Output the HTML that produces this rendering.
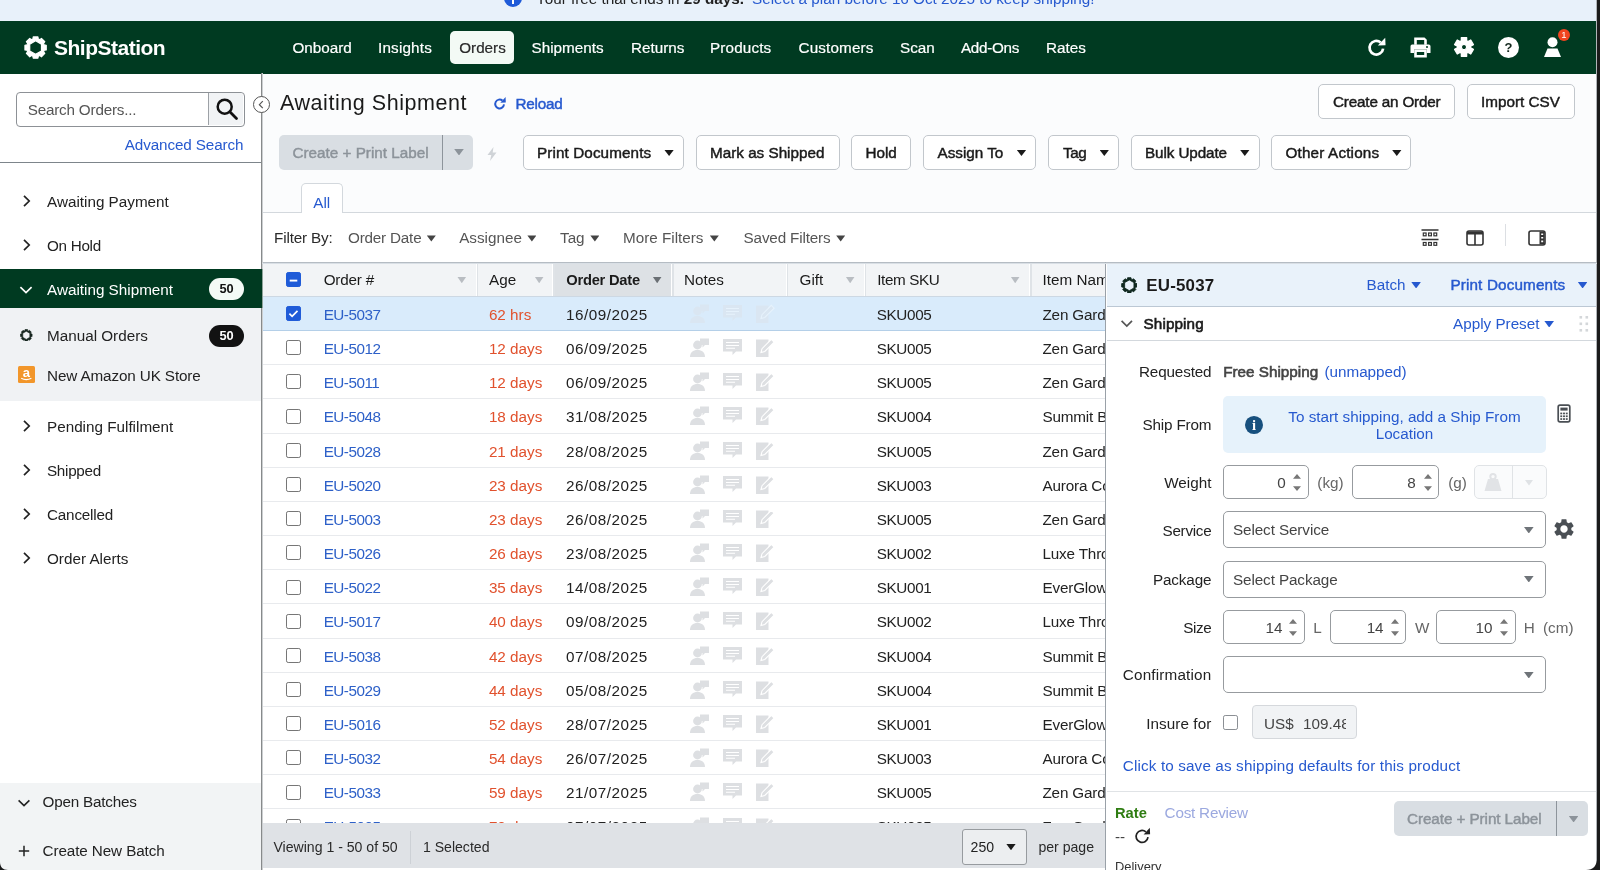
<!DOCTYPE html>
<html lang="en"><head><meta charset="utf-8"><title>ShipStation - Awaiting Shipment</title>
<style>
*{box-sizing:border-box;margin:0;padding:0}
html,body{width:1600px;height:870px;overflow:hidden;background:#fff}
body{font-family:"Liberation Sans",sans-serif;font-size:15.25px;color:#222;-webkit-font-smoothing:antialiased}
#app{position:relative;width:1600px;height:870px;overflow:hidden;will-change:transform}
.a{position:absolute;white-space:nowrap}
.t{position:absolute;white-space:nowrap;height:20px;line-height:20px}
.banner{left:0;top:0;width:1597px;height:21px;background:#e8f1fa}
.hdr{left:0;top:21px;width:1597px;height:52.8px;background:#003a21}
.nav{color:#fff;top:17px;font-size:15.25px;-webkit-text-stroke:0.2px currentColor}
.navpill{left:450px;top:10px;width:63.5px;height:33px;border-radius:5px;background:#f3faf5}
.side{left:0;top:74px;width:261px;height:797px;background:#fff}
.sideborder{left:261px;top:73.4px;width:2px;height:797px;background:linear-gradient(90deg,#878a8b 50%,#cccfd1 50%)}
.sitem{left:47px;font-size:15.25px;color:#222}
.btn{position:absolute;height:34.4px;top:135.2px;border:1px solid #c2c7cc;border-radius:5px;background:#fff;font-weight:normal;-webkit-text-stroke:0.45px #1a1a1a;letter-spacing:0;color:#1a1a1a;font-size:15.25px;line-height:34.6px;white-space:nowrap}
.btn .tx{position:absolute;top:0}
.caret{position:absolute;width:9.6px;height:6.4px;background:#1a1a1a;clip-path:polygon(0 0,100% 0,50% 100%)}
.flt{color:#555;top:228.3px}
.fcar{position:absolute;width:9px;height:6.2px;background:#444;clip-path:polygon(0 0,100% 0,50% 100%);top:235.4px}
.th{position:absolute;top:263.3px;height:33px;line-height:34.2px;color:#1a1a1a;white-space:nowrap}
.thc{position:absolute;top:276.6px;width:9.2px;height:6.6px;background:#b9bdc2;clip-path:polygon(0 0,100% 0,50% 100%)}
.vdiv{position:absolute;top:263.3px;height:33px;width:1.4px;background:#dfe3e7;box-shadow:-1px 0 0 #fff}
.row{position:absolute;left:262px;width:843.4px;height:34.18px;border-bottom:1px solid #e8eaed;background:#fff}
.row.sel{background:#d9ebfb;border-bottom:1px solid #b4cfe8}
.c{position:absolute;top:0;height:34px;line-height:35.2px;white-space:nowrap;color:#222}
.c.lnk{color:#2d60c8;line-height:36.8px;letter-spacing:-0.5px}
.c.dt{letter-spacing:0.55px}
.c.age{color:#e1512d}
.cb{position:absolute;width:15px;height:15px;border:1.3px solid #767676;border-radius:2.2px;background:#fff}
.cb.on{background:#1f5bd8;border-color:#1f5bd8}
.cb svg{position:absolute;left:-1.3px;top:-1.3px}
.ni{position:absolute;top:6px}
.row.sel .ni{opacity:.35}
.foot{left:262px;top:823px;width:843.4px;height:45px;background:#dfe2e6}
.panel{left:1105.3px;top:262.2px;width:491.7px;height:608px;background:#fff;border-left:1.2px solid #9aa1a8;border-top:1.2px solid #b5bcc3}
.lbl{position:absolute;white-space:nowrap;height:20px;line-height:20px;color:#222;text-align:right;right:385.5px}
.inp{position:absolute;border:1px solid #979b9f;border-radius:5px;background:#fff}
.num{position:absolute;white-space:nowrap;height:20px;line-height:20px;color:#444;text-align:right}
.spin{position:absolute;width:8px;height:17px}
.unit{position:absolute;white-space:nowrap;height:20px;line-height:20px;color:#666}
.blue{color:#2659cf}
.md{font-weight:normal!important;font-size:15.25px!important;-webkit-text-stroke:0.45px currentColor}

</style></head><body>
<svg width="0" height="0" style="position:absolute">
<defs>
<g id="notes" fill="#dddfe2">
 <!-- person with bubble -->
 <circle cx="8.5" cy="8" r="4.4"/><path d="M1 20c0-4.6 3-7 7.5-7s7.5 2.4 7.5 7z"/><path d="M11 1.5h9v6.5h-4l-2.5 2.5v-2.5h-2.500z"/>
 <!-- comment -->
 <path d="M34 2h19v12.500h-6l-3.500 3.500v-3.500h-9.500z"/><path d="M37 5.500h13M37 8.500h13M37 11.300h9" stroke="#fff" stroke-width="1.100" fill="none"/>
 <!-- note pencil -->
 <path d="M67 2.500h12.500v17.500h-12.500z"/><path d="M72 15.500l1-3.800 9.300-9.300 2.800 2.800-9.300 9.300z" stroke="#fff" stroke-width="1.100"/>
</g>
</defs></svg>
<div id="app">
<!-- banner -->
<div class="a banner"></div>
<div class="a" style="left:504px;top:-11px;width:18px;height:18px;border-radius:50%;background:#1f5bd8"></div>
<div class="a" style="left:511.800px;top:-4px;width:2.600px;height:7.500px;background:#fff"></div>
<div class="t" style="left:536px;top:-10.800px;color:#222">Your free trial ends in <b>29 days.</b></div>
<div class="t" style="left:752px;top:-10.800px;color:#2659cf">Select a plan before 16 Oct 2025 to keep shipping!</div>
<!-- header -->
<div class="a hdr"></div>
<svg class="a" style="left:23.800px;top:36px" width="23.200" height="23.200" viewBox="-12 -12 24 24"><path d="M-2.80 -8.87 L-2.45 -11.03 L2.45 -11.03 L2.80 -8.87 L4.29 -8.25 L6.07 -9.53 L9.53 -6.07 L8.25 -4.29 L8.87 -2.80 L11.03 -2.45 L11.03 2.45 L8.87 2.80 L8.25 4.29 L9.53 6.07 L6.07 9.53 L4.29 8.25 L2.80 8.87 L2.45 11.03 L-2.45 11.03 L-2.80 8.87 L-4.29 8.25 L-6.07 9.53 L-9.53 6.07 L-8.25 4.29 L-8.87 2.80 L-11.03 2.45 L-11.03 -2.45 L-8.87 -2.80 L-8.25 -4.29 L-9.53 -6.07 L-6.07 -9.53 L-4.29 -8.25Z M0.00 -7.00 L6.06 -3.50 L6.06 3.50 L0.00 7.00 L-6.06 3.50 L-6.06 -3.50Z" fill="#fff" stroke="#fff" stroke-width="1.2" stroke-linejoin="round" fill-rule="evenodd"/></svg>
<div class="a" style="left:54px;top:34px;height:28px;line-height:28px;font-size:21px;font-weight:bold;color:#fff;letter-spacing:-0.500px">ShipStation</div>
<div class="a navpill" style="top:31px"></div>
<div class="t nav" style="left:292.500px;top:38px">Onboard</div>
<div class="t nav" style="left:378px;top:38px;letter-spacing:0.18px">Insights</div>
<div class="t nav" style="left:459.200px;top:38px;color:#2a2a2a">Orders</div>
<div class="t nav" style="left:531.500px;top:38px">Shipments</div>
<div class="t nav" style="left:631px;top:38px">Returns</div>
<div class="t nav" style="left:710px;top:38px;letter-spacing:0.15px">Products</div>
<div class="t nav" style="left:798.500px;top:38px;letter-spacing:0.15px">Customers</div>
<div class="t nav" style="left:900px;top:38px">Scan</div>
<div class="t nav" style="left:961px;top:38px;letter-spacing:-0.3px">Add-Ons</div>
<div class="t nav" style="left:1046px;top:38px">Rates</div>
<!-- header icons -->
<svg class="a" style="left:1366.400px;top:37px" width="21" height="21" viewBox="0 0 20 20"><path d="M16.300 11a6.500 6.500 0 1 1-2.300-5.800" fill="none" stroke="#fff" stroke-width="2.600"/><path d="M11.300 8.200l7.300-0.300-0.300-7.300z" fill="#fff"/></svg>
<svg class="a" style="left:1409.500px;top:36.500px" width="21" height="21" viewBox="0 0 21 21"><g fill="#fff"><path d="M4.200 0.500h10.300l2.300 2.300v5h-2.600v-4.700h-7.400v4.700h-2.600z"/><path d="M2.200 7.500h16.600a1.700 1.700 0 0 1 1.700 1.700v6.800h-3.500v-3.500h-13v3.500h-3.500v-6.800a1.700 1.700 0 0 1 1.700-1.700z"/><path d="M4.200 12.500h12.600v8h-12.600zm2.600 2.400v3.200h7.400v-3.200z" fill-rule="evenodd"/></g><circle cx="17" cy="10" r="1" fill="#003a21"/></svg>
<svg class="a" style="left:1453.300px;top:36px" width="22" height="22" viewBox="-11 -11 22 22"><path d="M-2.62 -6.17 L-2.67 -9.32 L2.67 -9.32 L2.62 -6.17 L4.03 -5.35 L6.74 -6.98 L9.41 -2.35 L6.65 -0.82 L6.65 0.82 L9.41 2.35 L6.74 6.98 L4.03 5.35 L2.62 6.17 L2.67 9.32 L-2.67 9.32 L-2.62 6.17 L-4.03 5.35 L-6.74 6.98 L-9.41 2.35 L-6.65 0.82 L-6.65 -0.82 L-9.41 -2.35 L-6.74 -6.98 L-4.03 -5.35Z M-2.6 0 A2.6 2.6 0 1 0 2.6 0 A2.6 2.6 0 1 0 -2.6 0Z" fill="#fff" stroke="#fff" stroke-width="1.3" stroke-linejoin="round" fill-rule="evenodd"/></svg>
<div class="a" style="left:1498px;top:36.800px;width:21px;height:21px;border-radius:50%;background:#fff;color:#12261c;font-weight:bold;font-size:13px;line-height:21.5px;text-align:center">?</div>
<svg class="a" style="left:1543px;top:36px" width="19" height="22" viewBox="0 0 19 22"><circle cx="9.500" cy="6.200" r="5" fill="#fff"/><path d="M4.500 12.500h10l3.500 8.500h-17z" fill="#fff"/></svg>
<div class="a" style="left:1557.700px;top:28.500px;width:12.600px;height:12.600px;border-radius:50%;background:#f0441f;color:#fff;font-size:9.500px;line-height:12.600px;text-align:center">1</div>

<!-- sidebar -->
<div class="a side"></div>
<div class="a" style="left:0;top:307.600px;width:261px;height:93.200px;background:#f0f2f4"></div>
<div class="a" style="left:0;top:268.800px;width:261px;height:39.600px;background:#003a21"></div>
<div class="a" style="left:0;top:782.500px;width:261px;height:88px;background:#f2f4f5"></div>
<div class="a" style="left:0;top:161.800px;width:261px;height:1.200px;background:#7d858b"></div>
<!-- search -->
<div class="a" style="left:15.600px;top:91.500px;width:229.300px;height:35px;border:1px solid #8d9196;border-radius:4px;background:#fff"></div>
<div class="a" style="left:208.300px;top:92.800px;width:35.200px;height:32.600px;border-left:1px solid #9da1a6;border-radius:0 3px 3px 0;background:#f1f3f5"></div>
<div class="t" style="left:27.700px;top:99.500px;color:#555;letter-spacing:-0.200px">Search Orders...</div>
<svg class="a" style="left:215px;top:96.500px" width="24" height="24" viewBox="0 0 24 24"><circle cx="9.700" cy="9.700" r="7" fill="none" stroke="#111" stroke-width="2.500"/><path d="M14.800 14.800l6.700 6.700" stroke="#111" stroke-width="2.800" stroke-linecap="round"/></svg>
<div class="t blue" style="left:124.800px;top:135px;letter-spacing:-0.120px">Advanced Search</div>
<!-- sidebar items -->
<svg class="a" style="left:20px;top:194px" width="14" height="14" viewBox="0 0 14 14"><path d="M4 1.800l5.200 5.200-5.200 5.200" fill="none" stroke="#222" stroke-width="1.700"/></svg>
<div class="t sitem" style="top:191.800px">Awaiting Payment</div>
<svg class="a" style="left:20px;top:238px" width="14" height="14" viewBox="0 0 14 14"><path d="M4 1.800l5.200 5.200-5.200 5.200" fill="none" stroke="#222" stroke-width="1.700"/></svg>
<div class="t sitem" style="top:235.600px;letter-spacing:-0.3px">On Hold</div>
<svg class="a" style="left:19.300px;top:282.600px" width="14" height="14" viewBox="0 0 14 14"><path d="M1.400 4.200l5.600 5.400 5.600-5.400" fill="none" stroke="#fff" stroke-width="1.700"/></svg>
<div class="t sitem" style="top:279.500px;color:#fff">Awaiting Shipment</div>
<div class="a" style="left:209.300px;top:278.400px;width:34.400px;height:21.800px;border-radius:11px;background:#f4faf6;color:#111;font-weight:bold;font-size:12.800px;line-height:22px;text-align:center">50</div>
<svg class="a" style="left:20.100px;top:328.700px" width="12.600" height="12.600" viewBox="-12 -12 24 24"><path d="M-2.80 -8.87 L-2.45 -11.03 L2.45 -11.03 L2.80 -8.87 L4.29 -8.25 L6.07 -9.53 L9.53 -6.07 L8.25 -4.29 L8.87 -2.80 L11.03 -2.45 L11.03 2.45 L8.87 2.80 L8.25 4.29 L9.53 6.07 L6.07 9.53 L4.29 8.25 L2.80 8.87 L2.45 11.03 L-2.45 11.03 L-2.80 8.87 L-4.29 8.25 L-6.07 9.53 L-9.53 6.07 L-8.25 4.29 L-8.87 2.80 L-11.03 2.45 L-11.03 -2.45 L-8.87 -2.80 L-8.25 -4.29 L-9.53 -6.07 L-6.07 -9.53 L-4.29 -8.25Z M0.00 -7.80 L6.75 -3.90 L6.75 3.90 L0.00 7.80 L-6.75 3.90 L-6.75 -3.90Z" fill="#17261f" stroke="#17261f" stroke-width="1.2" stroke-linejoin="round" fill-rule="evenodd"/></svg>
<div class="t sitem" style="top:325.500px">Manual Orders</div>
<div class="a" style="left:209.300px;top:324.800px;width:34.400px;height:21.800px;border-radius:11px;background:#121212;color:#fff;font-weight:bold;font-size:12.800px;line-height:22px;text-align:center">50</div>
<div class="a" style="left:18px;top:366px;width:16.600px;height:17.200px;background:#f2962a;border-radius:1.500px;color:#fff;font-weight:bold;font-size:13px;line-height:13.500px;text-align:center">a</div>
<svg class="a" style="left:18px;top:366.200px" width="16.600" height="16.800" viewBox="0 0 16.600 16.800"><path d="M3.200 12.300q5 2.600 10.200 0" fill="none" stroke="#fff" stroke-width="1.100"/></svg>
<div class="t sitem" style="top:365.900px;letter-spacing:-0.12px">New Amazon UK Store</div>
<svg class="a" style="left:20px;top:419.200px" width="14" height="14" viewBox="0 0 14 14"><path d="M4 1.800l5.200 5.200-5.200 5.200" fill="none" stroke="#222" stroke-width="1.700"/></svg>
<div class="t sitem" style="top:416.700px">Pending Fulfilment</div>
<svg class="a" style="left:20px;top:463px" width="14" height="14" viewBox="0 0 14 14"><path d="M4 1.800l5.200 5.200-5.200 5.200" fill="none" stroke="#222" stroke-width="1.700"/></svg>
<div class="t sitem" style="top:460.700px;letter-spacing:-0.3px">Shipped</div>
<svg class="a" style="left:20px;top:507.100px" width="14" height="14" viewBox="0 0 14 14"><path d="M4 1.800l5.200 5.200-5.200 5.200" fill="none" stroke="#222" stroke-width="1.700"/></svg>
<div class="t sitem" style="top:504.700px;letter-spacing:-0.2px">Cancelled</div>
<svg class="a" style="left:20px;top:551.300px" width="14" height="14" viewBox="0 0 14 14"><path d="M4 1.800l5.200 5.200-5.200 5.200" fill="none" stroke="#222" stroke-width="1.700"/></svg>
<div class="t sitem" style="top:548.900px">Order Alerts</div>
<svg class="a" style="left:17.400px;top:795.500px" width="14" height="14" viewBox="0 0 14 14"><path d="M1.600 4.400l5.400 5.200 5.400-5.200" fill="none" stroke="#222" stroke-width="1.600"/></svg>
<div class="t sitem" style="left:42.500px;top:792.300px;letter-spacing:-0.2px">Open Batches</div>
<svg class="a" style="left:17.400px;top:843.500px" width="14" height="14" viewBox="0 0 14 14"><path d="M7 1.800v10.400M1.800 7h10.400" fill="none" stroke="#222" stroke-width="1.500"/></svg>
<div class="t sitem" style="left:42.500px;top:840.900px;letter-spacing:-0.1px">Create New Batch</div>

<!-- main top -->
<div class="a" style="left:262px;top:74px;width:1335px;height:138.400px;background:#fbfcfd"></div>
<div class="a" style="left:262px;top:212px;width:1335px;height:1.200px;background:#d3d8dd"></div>
<div class="a" style="left:280px;top:88px;height:30px;line-height:30px;font-size:21.500px;color:#1a1a1a;letter-spacing:0.550px">Awaiting Shipment</div>
<svg class="a" style="left:493.300px;top:96.600px" width="13.600" height="13.600" viewBox="0 0 20 20"><path d="M16.200 11a6.500 6.500 0 1 1-2.300-5.700" fill="none" stroke="#2659cf" stroke-width="2.900"/><path d="M10.800 8.400l8-.3-.3-8z" fill="#2659cf"/></svg>
<div class="t blue md" style="left:515.500px;top:93.800px;letter-spacing:-0.200px">Reload</div>
<div class="btn" style="left:1318.400px;top:84.200px;width:136.800px"><span class="tx" style="left:13.600px;letter-spacing:-0.18px">Create an Order</span></div>
<div class="btn" style="left:1467px;top:84.200px;width:107.600px"><span class="tx" style="left:13px">Import CSV</span></div>
<!-- toolbar -->
<div class="a" style="left:279px;top:134.800px;width:194px;height:34.800px;border-radius:5px;background:#d9dee3"></div>
<div class="a" style="left:441.600px;top:134.800px;width:1.200px;height:34.800px;background:#8d949b"></div>
<div class="t md" style="left:292.500px;top:143.100px;color:#8c939a">Create + Print Label</div>
<div class="caret" style="left:454.200px;top:149px;background:#8c939a"></div>
<svg class="a" style="left:487px;top:147px" width="10" height="14" viewBox="0 0 10 14"><path d="M6.500 0l-6 8h3.800l-1.300 6 6.500-8.500h-3.800z" fill="#cfd3d7"/></svg>
<div class="btn" style="left:522.500px;width:161.300px"><span class="tx" style="left:13.500px;letter-spacing:0.1px">Print Documents</span><span class="caret" style="left:140.800px;top:13.500px"></span></div>
<div class="btn" style="left:695.500px;width:144px"><span class="tx" style="left:13.500px">Mark as Shipped</span></div>
<div class="btn" style="left:851.200px;width:60.300px"><span class="tx" style="left:13.300px">Hold</span></div>
<div class="btn" style="left:923.200px;width:113px"><span class="tx" style="left:13.300px">Assign To</span><span class="caret" style="left:92.500px;top:13.500px"></span></div>
<div class="btn" style="left:1048px;width:70.800px"><span class="tx" style="left:14px;letter-spacing:-0.4px">Tag</span><span class="caret" style="left:50.500px;top:13.500px"></span></div>
<div class="btn" style="left:1130.500px;width:129px"><span class="tx" style="left:13.500px;letter-spacing:-0.1px">Bulk Update</span><span class="caret" style="left:108.500px;top:13.500px"></span></div>
<div class="btn" style="left:1271.200px;width:140.300px"><span class="tx" style="left:13.300px;letter-spacing:0.17px">Other Actions</span><span class="caret" style="left:119.800px;top:13.500px"></span></div>
<!-- tab -->
<div class="a" style="left:301.200px;top:182.800px;width:41.400px;height:30.600px;border:1px solid #d3d8dd;border-bottom:none;border-radius:5px 5px 0 0;background:#fff"></div>
<div class="t blue" style="left:313.300px;top:192.800px">All</div>
<!-- filter row -->
<div class="t" style="left:274px;top:228.300px;color:#2a2a2a;letter-spacing:-0.150px">Filter By:</div>
<div class="t flt" style="left:348px;letter-spacing:-0.200px">Order Date</div><span class="fcar" style="left:426.800px"></span>
<div class="t flt" style="left:459.200px">Assignee</div><span class="fcar" style="left:527.400px"></span>
<div class="t flt" style="left:560px">Tag</div><span class="fcar" style="left:590.400px"></span>
<div class="t flt" style="left:623px">More Filters</div><span class="fcar" style="left:709.800px"></span>
<div class="t flt" style="left:743.600px;letter-spacing:-0.17px">Saved Filters</div><span class="fcar" style="left:836.200px"></span>
<!-- view icons -->
<svg class="a" style="left:1421px;top:228.500px" width="18" height="18" viewBox="0 0 18 18"><g fill="none" stroke="#333" stroke-width="1.200"><path d="M0.500 1h17M0.500 10.500h17" stroke-width="1.300"/><rect x="2.300" y="4" width="2.800" height="2.800"/><rect x="7.600" y="4" width="2.800" height="2.800"/><rect x="12.900" y="4" width="2.800" height="2.800"/><rect x="2.300" y="13.500" width="2.800" height="2.800"/><rect x="7.600" y="13.500" width="2.800" height="2.800"/><rect x="12.900" y="13.500" width="2.800" height="2.800"/></g></svg>
<svg class="a" style="left:1465.500px;top:229.500px" width="18" height="16" viewBox="0 0 18 16"><rect x="1" y="1" width="16" height="14" rx="2" fill="none" stroke="#333" stroke-width="1.600"/><path d="M1 1.500h16v3h-16z" fill="#333"/><path d="M9 4v11" stroke="#333" stroke-width="1.600"/></svg>
<div class="a" style="left:1505px;top:224.400px;width:1.200px;height:21.200px;background:#dcdfe3"></div>
<svg class="a" style="left:1528px;top:229.500px" width="18" height="16" viewBox="0 0 18 16"><rect x="1" y="1" width="16" height="14" rx="2" fill="none" stroke="#333" stroke-width="1.600"/><path d="M11.500 1.500h5v13h-5z" fill="#333"/><path d="M13.200 4.200h2M13.200 7.800h2M13.200 11.400h2" stroke="#fff" stroke-width="1.600"/></svg>

<!-- table header -->
<div class="a" style="left:262px;top:262.200px;width:843.400px;height:1.200px;background:#b5bcc3"></div>
<div class="a" style="left:262px;top:263.300px;width:843.400px;height:33.700px;background:#f2f4f6"></div>
<div class="a" style="left:262px;top:263px;width:1335px;height:1px;background:#d9dfe5;z-index:3"></div>
<div class="a" style="left:554.400px;top:263.300px;width:118.200px;height:32.500px;background:#dde1e5"></div>
<span class="cb on" style="left:285.900px;top:272.200px"><svg viewBox="0 0 15 15" width="15" height="15"><path d="M3.700 8.600h7.600" stroke="#fff" stroke-width="1.900"/></svg></span>
<div class="th" style="left:323.700px;letter-spacing:-0.200px">Order #</div><span class="thc" style="left:457.200px"></span>
<span class="vdiv" style="left:476.800px"></span>
<div class="th" style="left:489px">Age</div><span class="thc" style="left:534.600px"></span>
<span class="vdiv" style="left:553.200px"></span>
<div class="th" style="left:566.200px;font-weight:bold;font-size:14.700px;letter-spacing:-0.220px;line-height:35px">Order Date</div><span class="thc" style="left:652.600px;background:#6a6f74"></span>
<span class="vdiv" style="left:672.400px"></span>
<div class="th" style="left:684px">Notes</div>
<span class="vdiv" style="left:786.800px"></span>
<div class="th" style="left:799.600px">Gift</div><span class="thc" style="left:845.600px"></span>
<span class="vdiv" style="left:864.800px"></span>
<div class="th" style="left:877.200px;letter-spacing:-0.38px">Item SKU</div><span class="thc" style="left:1010.600px"></span>
<span class="vdiv" style="left:1030.200px"></span>
<div class="th" style="left:1042.500px">Item Name</div>
<!-- rows -->
<div class="row sel" style="top:296.80px"><span class="cb on" style="left:23.8px;top:9.3px"><svg viewBox="0 0 15 15" width="15" height="15"><path d="M3.4 7.7l2.7 2.7 5.4-5.6" fill="none" stroke="#fff" stroke-width="1.7"/></svg></span><span class="c lnk" style="left:61.7px">EU-5037</span><span class="c age" style="left:226.9px">62 hrs</span><span class="c dt" style="left:303.9px">16/09/2025</span><svg class="ni" style="left:427.2px" width="88" height="22" viewBox="0 0 88 22"><use href="#notes"/></svg><span class="c" style="left:614.7px;letter-spacing:-0.35px">SKU005</span><span class="c" style="left:780.4px;letter-spacing:-0.15px">Zen Garden Kit</span></div>
<div class="row" style="top:330.98px"><span class="cb" style="left:23.8px;top:9.3px"></span><span class="c lnk" style="left:61.7px">EU-5012</span><span class="c age" style="left:226.9px">12 days</span><span class="c dt" style="left:303.9px">06/09/2025</span><svg class="ni" style="left:427.2px" width="88" height="22" viewBox="0 0 88 22"><use href="#notes"/></svg><span class="c" style="left:614.7px;letter-spacing:-0.35px">SKU005</span><span class="c" style="left:780.4px;letter-spacing:-0.15px">Zen Garden Kit</span></div>
<div class="row" style="top:365.16px"><span class="cb" style="left:23.8px;top:9.3px"></span><span class="c lnk" style="left:61.7px">EU-5011</span><span class="c age" style="left:226.9px">12 days</span><span class="c dt" style="left:303.9px">06/09/2025</span><svg class="ni" style="left:427.2px" width="88" height="22" viewBox="0 0 88 22"><use href="#notes"/></svg><span class="c" style="left:614.7px;letter-spacing:-0.35px">SKU005</span><span class="c" style="left:780.4px;letter-spacing:-0.15px">Zen Garden Kit</span></div>
<div class="row" style="top:399.34px"><span class="cb" style="left:23.8px;top:9.3px"></span><span class="c lnk" style="left:61.7px">EU-5048</span><span class="c age" style="left:226.9px">18 days</span><span class="c dt" style="left:303.9px">31/08/2025</span><svg class="ni" style="left:427.2px" width="88" height="22" viewBox="0 0 88 22"><use href="#notes"/></svg><span class="c" style="left:614.7px;letter-spacing:-0.35px">SKU004</span><span class="c" style="left:780.4px;letter-spacing:-0.15px">Summit Backpack</span></div>
<div class="row" style="top:433.52px"><span class="cb" style="left:23.8px;top:9.3px"></span><span class="c lnk" style="left:61.7px">EU-5028</span><span class="c age" style="left:226.9px">21 days</span><span class="c dt" style="left:303.9px">28/08/2025</span><svg class="ni" style="left:427.2px" width="88" height="22" viewBox="0 0 88 22"><use href="#notes"/></svg><span class="c" style="left:614.7px;letter-spacing:-0.35px">SKU005</span><span class="c" style="left:780.4px;letter-spacing:-0.15px">Zen Garden Kit</span></div>
<div class="row" style="top:467.70px"><span class="cb" style="left:23.8px;top:9.3px"></span><span class="c lnk" style="left:61.7px">EU-5020</span><span class="c age" style="left:226.9px">23 days</span><span class="c dt" style="left:303.9px">26/08/2025</span><svg class="ni" style="left:427.2px" width="88" height="22" viewBox="0 0 88 22"><use href="#notes"/></svg><span class="c" style="left:614.7px;letter-spacing:-0.35px">SKU003</span><span class="c" style="left:780.4px;letter-spacing:-0.15px">Aurora Coffee Mug</span></div>
<div class="row" style="top:501.88px"><span class="cb" style="left:23.8px;top:9.3px"></span><span class="c lnk" style="left:61.7px">EU-5003</span><span class="c age" style="left:226.9px">23 days</span><span class="c dt" style="left:303.9px">26/08/2025</span><svg class="ni" style="left:427.2px" width="88" height="22" viewBox="0 0 88 22"><use href="#notes"/></svg><span class="c" style="left:614.7px;letter-spacing:-0.35px">SKU005</span><span class="c" style="left:780.4px;letter-spacing:-0.15px">Zen Garden Kit</span></div>
<div class="row" style="top:536.06px"><span class="cb" style="left:23.8px;top:9.3px"></span><span class="c lnk" style="left:61.7px">EU-5026</span><span class="c age" style="left:226.9px">26 days</span><span class="c dt" style="left:303.9px">23/08/2025</span><svg class="ni" style="left:427.2px" width="88" height="22" viewBox="0 0 88 22"><use href="#notes"/></svg><span class="c" style="left:614.7px;letter-spacing:-0.35px">SKU002</span><span class="c" style="left:780.4px;letter-spacing:-0.15px">Luxe Throw Blanket</span></div>
<div class="row" style="top:570.24px"><span class="cb" style="left:23.8px;top:9.3px"></span><span class="c lnk" style="left:61.7px">EU-5022</span><span class="c age" style="left:226.9px">35 days</span><span class="c dt" style="left:303.9px">14/08/2025</span><svg class="ni" style="left:427.2px" width="88" height="22" viewBox="0 0 88 22"><use href="#notes"/></svg><span class="c" style="left:614.7px;letter-spacing:-0.35px">SKU001</span><span class="c" style="left:780.4px;letter-spacing:-0.15px">EverGlow Lamp</span></div>
<div class="row" style="top:604.42px"><span class="cb" style="left:23.8px;top:9.3px"></span><span class="c lnk" style="left:61.7px">EU-5017</span><span class="c age" style="left:226.9px">40 days</span><span class="c dt" style="left:303.9px">09/08/2025</span><svg class="ni" style="left:427.2px" width="88" height="22" viewBox="0 0 88 22"><use href="#notes"/></svg><span class="c" style="left:614.7px;letter-spacing:-0.35px">SKU002</span><span class="c" style="left:780.4px;letter-spacing:-0.15px">Luxe Throw Blanket</span></div>
<div class="row" style="top:638.60px"><span class="cb" style="left:23.8px;top:9.3px"></span><span class="c lnk" style="left:61.7px">EU-5038</span><span class="c age" style="left:226.9px">42 days</span><span class="c dt" style="left:303.9px">07/08/2025</span><svg class="ni" style="left:427.2px" width="88" height="22" viewBox="0 0 88 22"><use href="#notes"/></svg><span class="c" style="left:614.7px;letter-spacing:-0.35px">SKU004</span><span class="c" style="left:780.4px;letter-spacing:-0.15px">Summit Backpack</span></div>
<div class="row" style="top:672.78px"><span class="cb" style="left:23.8px;top:9.3px"></span><span class="c lnk" style="left:61.7px">EU-5029</span><span class="c age" style="left:226.9px">44 days</span><span class="c dt" style="left:303.9px">05/08/2025</span><svg class="ni" style="left:427.2px" width="88" height="22" viewBox="0 0 88 22"><use href="#notes"/></svg><span class="c" style="left:614.7px;letter-spacing:-0.35px">SKU004</span><span class="c" style="left:780.4px;letter-spacing:-0.15px">Summit Backpack</span></div>
<div class="row" style="top:706.96px"><span class="cb" style="left:23.8px;top:9.3px"></span><span class="c lnk" style="left:61.7px">EU-5016</span><span class="c age" style="left:226.9px">52 days</span><span class="c dt" style="left:303.9px">28/07/2025</span><svg class="ni" style="left:427.2px" width="88" height="22" viewBox="0 0 88 22"><use href="#notes"/></svg><span class="c" style="left:614.7px;letter-spacing:-0.35px">SKU001</span><span class="c" style="left:780.4px;letter-spacing:-0.15px">EverGlow Lamp</span></div>
<div class="row" style="top:741.14px"><span class="cb" style="left:23.8px;top:9.3px"></span><span class="c lnk" style="left:61.7px">EU-5032</span><span class="c age" style="left:226.9px">54 days</span><span class="c dt" style="left:303.9px">26/07/2025</span><svg class="ni" style="left:427.2px" width="88" height="22" viewBox="0 0 88 22"><use href="#notes"/></svg><span class="c" style="left:614.7px;letter-spacing:-0.35px">SKU003</span><span class="c" style="left:780.4px;letter-spacing:-0.15px">Aurora Coffee Mug</span></div>
<div class="row" style="top:775.32px"><span class="cb" style="left:23.8px;top:9.3px"></span><span class="c lnk" style="left:61.7px">EU-5033</span><span class="c age" style="left:226.9px">59 days</span><span class="c dt" style="left:303.9px">21/07/2025</span><svg class="ni" style="left:427.2px" width="88" height="22" viewBox="0 0 88 22"><use href="#notes"/></svg><span class="c" style="left:614.7px;letter-spacing:-0.35px">SKU005</span><span class="c" style="left:780.4px;letter-spacing:-0.15px">Zen Garden Kit</span></div>
<div class="row" style="top:809.50px"><span class="cb" style="left:23.8px;top:9.3px"></span><span class="c lnk" style="left:61.7px;margin-top:-1px">EU-5005</span><span class="c age" style="left:226.9px;margin-top:-1px">70 days</span><span class="c dt" style="left:303.9px;margin-top:-1px">07/07/2025</span><svg class="ni" style="left:427.2px" width="88" height="22" viewBox="0 0 88 22"><use href="#notes"/></svg><span class="c" style="left:614.7px;letter-spacing:-0.35px;margin-top:-1px">SKU005</span><span class="c" style="left:780.4px;letter-spacing:-0.15px;margin-top:-1px">Zen Garden Kit</span></div>
<div class="a" style="left:262px;top:296px;width:843.400px;height:1px;background:#cdd8e3"></div>
<!-- footer -->
<div class="a foot"></div>
<div class="t" style="left:273.400px;top:837px;color:#2a2a2a;font-size:14.100px">Viewing 1 - 50 of 50</div>
<div class="a" style="left:410px;top:831px;width:1.200px;height:33px;background:#cdd1d6"></div>
<div class="t" style="left:422.900px;top:837px;color:#2a2a2a;font-size:14.100px">1 Selected</div>
<div class="a" style="left:962px;top:828.600px;width:64.600px;height:36px;border:1px solid #979b9f;border-radius:3px;background:#eceef0"></div>
<div class="t" style="left:970.600px;top:837px;color:#222;font-size:14.100px">250</div>
<span class="caret" style="left:1006.200px;top:843.800px"></span>
<div class="t" style="left:1038.400px;top:837px;color:#2a2a2a;font-size:14.100px">per page</div>
<div class="a" style="left:262px;top:868px;width:843.400px;height:2px;background:#fff"></div>

<!-- right panel -->
<div class="a panel"></div>
<div class="a" style="left:1106.500px;top:263.400px;width:490px;height:43.600px;background:#e9f2fa;border-bottom:1px solid #bcc8d4"></div>
<svg class="a" style="left:1120.600px;top:276.600px" width="16.600" height="16.600" viewBox="-12 -12 24 24"><path d="M-2.80 -8.87 L-2.45 -11.03 L2.45 -11.03 L2.80 -8.87 L4.29 -8.25 L6.07 -9.53 L9.53 -6.07 L8.25 -4.29 L8.87 -2.80 L11.03 -2.45 L11.03 2.45 L8.87 2.80 L8.25 4.29 L9.53 6.07 L6.07 9.53 L4.29 8.25 L2.80 8.87 L2.45 11.03 L-2.45 11.03 L-2.80 8.87 L-4.29 8.25 L-6.07 9.53 L-9.53 6.07 L-8.25 4.29 L-8.87 2.80 L-11.03 2.45 L-11.03 -2.45 L-8.87 -2.80 L-8.25 -4.29 L-9.53 -6.07 L-6.07 -9.53 L-4.29 -8.25Z M0.00 -7.80 L6.75 -3.90 L6.75 3.90 L0.00 7.80 L-6.75 3.90 L-6.75 -3.90Z" fill="#10281f" stroke="#10281f" stroke-width="1.2" stroke-linejoin="round" fill-rule="evenodd"/></svg>
<div class="a" style="left:1146.300px;top:273.500px;height:24px;line-height:24px;font-size:16.900px;font-weight:bold;color:#1a1a1a;letter-spacing:0.200px">EU-5037</div>
<div class="t blue" style="left:1366.500px;top:274.800px">Batch</div><span class="caret" style="left:1411.300px;top:282px;background:#2659cf"></span>
<div class="t blue md" style="left:1450.400px;top:274.800px;letter-spacing:0.150px">Print Documents</div><span class="caret" style="left:1577.800px;top:282px;background:#2659cf"></span>
<!-- shipping section head -->
<div class="a" style="left:1106.500px;top:339.900px;width:490px;height:1.100px;background:#d3d8dd"></div>
<svg class="a" style="left:1120px;top:317px" width="14" height="14" viewBox="0 0 14 14"><path d="M1.600 3.800l5.200 5.200 5.200-5.200" fill="none" stroke="#555" stroke-width="1.700"/></svg>
<div class="t md" style="left:1143.600px;top:314.200px;color:#1a1a1a;letter-spacing:0.100px;-webkit-text-stroke-width:0.600px">Shipping</div>
<div class="t blue" style="left:1453px;top:314px">Apply Preset</div><span class="caret" style="left:1544.400px;top:321px;background:#2659cf"></span>
<svg class="a" style="left:1578.500px;top:315px" width="10" height="18" viewBox="0 0 10 18"><g fill="#d4d7da"><rect x="0.500" y="1" width="2.600" height="2.600"/><rect x="6.500" y="1" width="2.600" height="2.600"/><rect x="0.500" y="7.500" width="2.600" height="2.600"/><rect x="6.500" y="7.500" width="2.600" height="2.600"/><rect x="0.500" y="14" width="2.600" height="2.600"/><rect x="6.500" y="14" width="2.600" height="2.600"/></g></svg>
<!-- requested -->
<div class="lbl" style="top:361.600px;right:388.600px;letter-spacing:-0.15px">Requested</div>
<div class="t md" style="left:1223.200px;top:361.800px;color:#444;-webkit-text-stroke-width:0.600px">Free Shipping</div>
<div class="t blue" style="left:1324.400px;top:361.600px">(unmapped)</div>
<!-- ship from -->
<div class="lbl" style="top:415.400px;right:388.600px;letter-spacing:-0.15px">Ship From</div>
<div class="a" style="left:1222.800px;top:396.200px;width:323.500px;height:57.300px;border-radius:5px;background:#e6f2fb"></div>
<div class="a" style="left:1245px;top:416px;width:17.800px;height:17.800px;border-radius:50%;background:#17507e;color:#fff;font-family:'Liberation Serif',serif;font-weight:bold;font-size:14.500px;line-height:18px;text-align:center">i</div>
<div class="a blue" style="left:1263px;top:407.500px;width:283px;text-align:center;line-height:17.800px;white-space:normal">To start shipping, add a Ship From<br>Location</div>
<svg class="a" style="left:1556.500px;top:403.500px" width="14" height="19" viewBox="0 0 14 19"><rect x="1.200" y="1.200" width="11.600" height="16.600" rx="1.800" fill="none" stroke="#4a4f54" stroke-width="1.700"/><rect x="3.400" y="3.600" width="7.200" height="3" fill="#4a4f54"/><g fill="#4a4f54"><rect x="3.300" y="8.600" width="1.900" height="1.700"/><rect x="6.050" y="8.600" width="1.900" height="1.700"/><rect x="8.800" y="8.600" width="1.900" height="1.700"/><rect x="3.300" y="11.400" width="1.900" height="1.700"/><rect x="6.050" y="11.400" width="1.900" height="1.700"/><rect x="8.800" y="11.400" width="1.900" height="1.700"/><rect x="3.300" y="14.200" width="1.900" height="1.700"/><rect x="6.050" y="14.200" width="1.900" height="1.700"/><rect x="8.800" y="14.200" width="1.900" height="1.700"/></g></svg>
<!-- weight -->
<div class="lbl" style="top:472.600px;right:388.600px">Weight</div>
<div class="inp" style="left:1223.200px;top:465.300px;width:85.600px;height:34px"></div>
<div class="num" style="left:1240px;width:45.800px;top:472.800px">0</div>
<svg class="spin" style="left:1292.800px;top:473.700px" viewBox="0 0 8 17"><path d="M0 4.800l4-4.800 4 4.800zM0 12.200l4 4.800 4-4.800z" fill="#777"/></svg>
<div class="unit" style="left:1317.300px;top:472.600px">(kg)</div>
<div class="inp" style="left:1352.400px;top:465.300px;width:86.600px;height:34px"></div>
<div class="num" style="left:1370px;width:45.800px;top:472.800px">8</div>
<svg class="spin" style="left:1423.600px;top:473.700px" viewBox="0 0 8 17"><path d="M0 4.800l4-4.800 4 4.800zM0 12.200l4 4.800 4-4.800z" fill="#777"/></svg>
<div class="unit" style="left:1448.200px;top:472.600px">(g)</div>
<div class="a" style="left:1474.400px;top:465.300px;width:72.600px;height:34px;border:1px solid #e0e3e6;border-radius:5px;background:#fafbfc"></div>
<div class="a" style="left:1512.300px;top:465.500px;width:1px;height:33.600px;background:#e0e3e6"></div>
<svg class="a" style="left:1483px;top:472px" width="20" height="20" viewBox="0 0 20 20"><path d="M5 7h10l3.500 12h-17z" fill="#e1e3e6"/><circle cx="10" cy="4.600" r="2.700" fill="none" stroke="#e1e3e6" stroke-width="2"/></svg>
<span class="caret" style="left:1525px;top:480px;background:#dfe2e5;width:8px;height:5.500px"></span>
<!-- service -->
<div class="lbl" style="top:520.600px;right:388.600px;letter-spacing:-0.28px">Service</div>
<div class="inp" style="left:1223.300px;top:511.200px;width:323px;height:37.300px"></div>
<div class="t" style="left:1233px;top:520.300px;color:#444;letter-spacing:-0.1px">Select Service</div>
<span class="caret" style="left:1524px;top:527px;background:#6f7479"></span>
<svg class="a" style="left:1552.500px;top:518.300px" width="22" height="22" viewBox="0 0 24 24"><path fill="#4a4f54" d="M19.140 12.940c.04-.3.060-.61.060-.94 0-.32-.02-.64-.07-.94l2.030-1.580a.49.490 0 0 0 .12-.61l-1.920-3.320a.488.488 0 0 0-.59-.22l-2.390.96c-.5-.38-1.030-.7-1.620-.94l-.36-2.540a.484.484 0 0 0-.48-.41h-3.840c-.24 0-.43.170-.47.410l-.36 2.540c-.59.240-1.130.57-1.620.94l-2.390-.96c-.22-.08-.47 0-.59.220L2.740 8.870c-.12.210-.08.470.12.610l2.030 1.580c-.05.300-.09.630-.09.940s.02.640.07.940l-2.030 1.580a.49.490 0 0 0-.12.610l1.920 3.320c.12.220.37.290.59.220l2.390-.96c.5.380 1.030.7 1.620.94l.36 2.540c.05.240.24.410.48.410h3.840c.24 0 .44-.17.470-.41l.36-2.540c.59-.24 1.130-.56 1.620-.94l2.390.96c.22.080.47 0 .59-.22l1.920-3.320c.12-.22.070-.47-.12-.61l-2.010-1.580zM12 15.600c-1.980 0-3.600-1.620-3.600-3.600s1.620-3.600 3.600-3.600 3.600 1.620 3.600 3.600-1.620 3.600-3.600 3.600z" transform="translate(-1.400 -1.400) scale(1.117)"/></svg>
<!-- package -->
<div class="lbl" style="top:569.700px;right:388.600px;letter-spacing:-0.12px">Package</div>
<div class="inp" style="left:1223.300px;top:560.500px;width:323px;height:37.600px"></div>
<div class="t" style="left:1233px;top:569.500px;color:#444;letter-spacing:-0.1px">Select Package</div>
<span class="caret" style="left:1524px;top:576px;background:#6f7479"></span>
<!-- size -->
<div class="lbl" style="top:617.500px;right:388.600px;letter-spacing:-0.35px">Size</div>
<div class="inp" style="left:1223.300px;top:610.300px;width:82px;height:34.200px"></div>
<div class="num" style="left:1236px;width:46.400px;top:617.800px">14</div>
<svg class="spin" style="left:1289.200px;top:618.800px" viewBox="0 0 8 17"><path d="M0 4.800l4-4.800 4 4.800zM0 12.200l4 4.800 4-4.800z" fill="#777"/></svg>
<div class="unit" style="left:1313.200px;top:617.500px">L</div>
<div class="inp" style="left:1329.600px;top:610.300px;width:76.700px;height:34.200px"></div>
<div class="num" style="left:1337px;width:46.600px;top:617.800px">14</div>
<svg class="spin" style="left:1390.500px;top:618.800px" viewBox="0 0 8 17"><path d="M0 4.800l4-4.800 4 4.800zM0 12.200l4 4.800 4-4.800z" fill="#777"/></svg>
<div class="unit" style="left:1415px;top:617.500px">W</div>
<div class="inp" style="left:1436px;top:610.300px;width:79.700px;height:34.200px"></div>
<div class="num" style="left:1446px;width:46.400px;top:617.800px">10</div>
<svg class="spin" style="left:1499.800px;top:618.800px" viewBox="0 0 8 17"><path d="M0 4.800l4-4.800 4 4.800zM0 12.200l4 4.800 4-4.800z" fill="#777"/></svg>
<div class="unit" style="left:1523.800px;top:617.500px">H</div>
<div class="unit" style="left:1543px;top:617.500px">(cm)</div>
<!-- confirmation -->
<div class="lbl" style="top:665px;right:388.600px;letter-spacing:0.18px">Confirmation</div>
<div class="inp" style="left:1223.300px;top:656.400px;width:323px;height:36.800px"></div>
<span class="caret" style="left:1524px;top:672px;background:#6f7479"></span>
<!-- insure -->
<div class="lbl" style="top:713.700px;right:388.600px;letter-spacing:0.08px">Insure for</div>
<span class="cb" style="left:1223.300px;top:714.500px;border-color:#8b8f94"></span>
<div class="a" style="left:1252.200px;top:705px;width:104.800px;height:34px;border:1px solid #d5d8dc;border-radius:4px;background:#f1f3f5"></div>
<div class="t" style="left:1264px;top:713.700px;color:#444">US$</div>
<div class="a" style="left:1303px;top:713.700px;width:42.600px;height:20px;line-height:20px;overflow:hidden;color:#444;white-space:nowrap">109.48</div>
<div class="t blue" style="left:1122.800px;top:755.700px;letter-spacing:0.135px">Click to save as shipping defaults for this product</div>
<div class="a" style="left:1106.500px;top:791px;width:490px;height:1.100px;background:#e0e3e6"></div>
<!-- rate -->
<div class="t" style="left:1115px;top:803px;font-weight:bold;color:#2f7d12;font-size:14.700px">Rate</div>
<div class="t" style="left:1164.600px;top:803px;color:#9ba8df;letter-spacing:-0.22px">Cost Review</div>
<div class="t" style="left:1115px;top:826.500px;color:#444">--</div>
<svg class="a" style="left:1132.800px;top:826.800px" width="18.400" height="18.400" viewBox="0 0 20 20"><path d="M16.300 11a6.500 6.500 0 1 1-2.300-5.700" fill="none" stroke="#222" stroke-width="1.900"/><path d="M11.600 8.200l7-.3-.3-7z" fill="#222"/></svg>
<div class="t" style="left:1115px;top:857px;color:#333;font-size:12.900px">Delivery</div>
<div class="a" style="left:1393.700px;top:801.200px;width:194.300px;height:35.100px;border-radius:5px;background:#d9dee3"></div>
<div class="a" style="left:1556px;top:801.200px;width:1.200px;height:35.100px;background:#8d949b"></div>
<div class="t md" style="left:1407px;top:809px;color:#8c939a;letter-spacing:-0.075px">Create + Print Label</div>
<span class="caret" style="left:1568.800px;top:816px;background:#8c939a"></span>


<div class="a sideborder"></div>
<div class="a" style="left:261px;top:268.800px;width:1px;height:39.600px;background:#003a21"></div>
<div class="a" style="left:262px;top:268.800px;width:1px;height:39.600px;background:#8fa39a"></div>
<!-- collapse -->
<div class="a" style="left:252.500px;top:95.800px;width:17.400px;height:17.400px;border-radius:50%;border:1.200px solid #555;background:#fff"></div>
<svg class="a" style="left:252.500px;top:95.800px" width="17.400" height="17.400" viewBox="0 0 17.400 17.400"><path d="M9.800 5.200l-3.400 3.500 3.400 3.500" fill="none" stroke="#555" stroke-width="1.200"/></svg>
<!-- window edge -->
<div class="a" style="left:1596.400px;top:0;width:0.800px;height:870px;background:#b0b4b8"></div>
<div class="a" style="left:1597.200px;top:0;width:2.800px;height:870px;background:#1b1b1b"></div>
<svg class="a" style="left:1586px;top:857px" width="14" height="13" viewBox="0 0 14 13"><path d="M14 0v13h-14c7 0 11.200-4 11.200-13z" fill="#1b1b1b"/></svg>
<svg class="a" style="left:0;top:862px" width="8" height="8" viewBox="0 0 8 8"><path d="M0 0v8h8c-5 0-8-3-8-8z" fill="#1b1b1b"/></svg>
</div>
</body></html>
